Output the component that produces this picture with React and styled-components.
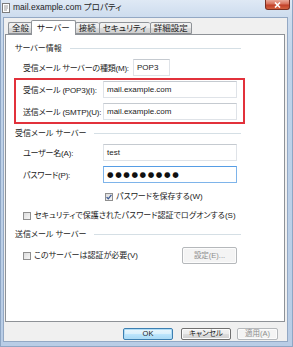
import React from "react";
import styled, { createGlobalStyle } from "styled-components";

const GlobalStyle = createGlobalStyle`
  html, body {
    margin: 0;
    padding: 0;
    background: #ffffff;
  }
  body {
    font-family: "Liberation Sans", "Noto Sans CJK JP", sans-serif;
    font-size: 8px;
    color: #1b1b1b;
    font-feature-settings: "palt";
  }
`;

const Window = styled.div`
  width: 293px;
  height: 347px;
  box-sizing: border-box;
  display: flex;
  flex-direction: column;
  background: linear-gradient(180deg, #dfe9f5 0px, #cddcee 17px, #bfd3ea 60px, #b9cde6 100%);
  border: 1px solid #8ea6c4;
  border-top: none;
`;

const TitleBar = styled.div`
  height: 17px;
  display: flex;
  align-items: flex-start;
  padding-left: 1px;
  flex-shrink: 0;
`;

const TitleIcon = styled.svg`
  width: 9px;
  height: 10px;
  margin-top: 3px;
  margin-right: 2px;
`;

const TitleText = styled.span`
  font-size: 8.5px;
  line-height: 14px;
  color: #1e1e1e;
`;

const CloseButton = styled.div`
  margin-left: auto;
  margin-right: 2px;
  width: 25px;
  height: 10px;
  box-sizing: border-box;
  border: 1px solid #7a2f22;
  border-top: none;
  border-radius: 0 0 3px 3px;
  background: linear-gradient(180deg, #e9a99a 0%, #d8705a 45%, #c0402a 55%, #d4613f 100%);
  display: flex;
  align-items: center;
  justify-content: center;
`;

const Client = styled.div`
  flex: 1;
  display: flex;
  flex-direction: column;
  margin: 0 4px 4px 2px;
  padding: 2px 0 1px 0;
  background: #f0f0f0;
  border: 1px solid #93a8c4;
`;

const TabStrip = styled.div`
  display: flex;
  align-items: flex-end;
  height: 14px;
  padding-left: 4px;
  position: relative;
  z-index: 1;
`;

const Tab = styled.div`
  box-sizing: border-box;
  height: ${(p) => (p.$active ? "15px" : "12px")};
  padding: 0 ${(p) => (p.$active ? "5px" : "3px")};
  margin: 0 ${(p) => (p.$active ? "-1px" : "0")};
  margin-bottom: ${(p) => (p.$active ? "-1px" : "0")};
  border: 1px solid #8e9297;
  border-bottom: ${(p) => (p.$active ? "none" : "1px solid #8e9297")};
  border-right: ${(p) => (p.$last || p.$active ? "1px solid #8e9297" : "none")};
  border-radius: 2px 2px 0 0;
  background: ${(p) =>
    p.$active ? "#ffffff" : "linear-gradient(180deg, #f2f2f2 0%, #ebebeb 50%, #dddddd 51%, #cfcfcf 100%)"};
  display: flex;
  align-items: center;
  font-size: 8.5px;
  line-height: 10px;
  position: relative;
  z-index: ${(p) => (p.$active ? 2 : 1)};
`;

const Panel = styled.div`
  flex: 1;
  margin: 0 2px 0 1px;
  background: #ffffff;
  border: 1px solid #8e9297;
  padding: 0 0 0 9px;
`;

const Content = styled.div`
  width: 230px;
  display: flex;
  flex-direction: column;
`;

const GroupHeading = styled.div`
  display: flex;
  align-items: center;
  height: 12px;
  margin-top: ${(p) => p.$top}px;
  gap: 8px;
  padding-right: 4px;
`;

const HeadingText = styled.span`
  white-space: nowrap;
  line-height: 12px;
`;

const HeadingLine = styled.div`
  flex: 1;
  height: 0;
  border-top: 1px solid #d5dfe5;
  border-bottom: 1px solid #ffffff;
`;

const Row = styled.div`
  display: flex;
  align-items: center;
  height: 17px;
  margin-top: ${(p) => p.$top || 0}px;
  padding: 0 ${(p) => (p.$inset ? 0 : 8)}px 0 ${(p) => (p.$inset ? 0 : 8)}px;
`;

const Label = styled.span`
  width: ${(p) => p.$width || 80}px;
  flex-shrink: 0;
  white-space: nowrap;
  letter-spacing: -0.2px;
`;

const TextBox = styled.div`
  box-sizing: border-box;
  width: ${(p) => (p.$width ? `${p.$width}px` : "auto")};
  flex: ${(p) => (p.$width ? "none" : 1)};
  height: 17px;
  display: flex;
  align-items: center;
  padding-left: 3px;
  background: #ffffff;
  border: 1px solid ${(p) => (p.$focused ? "#7eb4ea" : "#dfe3e8")};
  border-top-color: ${(p) => (p.$focused ? "#569de5" : "#c5cad0")};
  white-space: nowrap;
`;

const Dots = styled.span`
  font-family: "DejaVu Sans", sans-serif;
  font-size: 7.5px;
  letter-spacing: 1.6px;
  color: #101010;
`;

const RedBox = styled.div`
  margin-top: 2px;
  margin-left: -1px;
  width: 231px;
  box-sizing: border-box;
  border: 2px solid #e2313b;
  padding: 1px 6px 2px 7px;
  display: flex;
  flex-direction: column;
  gap: 5px;
`;

const CheckRow = styled.label`
  display: flex;
  align-items: center;
  height: 12px;
  margin-top: ${(p) => p.$top}px;
  padding-left: ${(p) => p.$indent}px;
  white-space: nowrap;
  gap: 3px;
`;

const CheckBox = styled.span`
  width: 8px;
  height: 8px;
  box-sizing: border-box;
  border: 1px solid #8f8f8f;
  background: linear-gradient(135deg, #dcdcdc 0%, #f6f6f6 100%);
  display: flex;
  align-items: center;
  justify-content: center;
  flex-shrink: 0;
`;

const CheckText = styled.span`
  line-height: 12px;
`;

const Spacer = styled.div`
  flex: 1;
`;

const DialogButton = styled.div`
  box-sizing: border-box;
  width: ${(p) => p.$width}px;
  height: ${(p) => p.$height || 12}px;
  margin-left: ${(p) => p.$gap || 0}px;
  border: 1px solid ${(p) => (p.$disabled ? "#b5b8bb" : p.$default ? "#3c7fb1" : "#707070")};
  border-radius: 2px;
  background: ${(p) =>
    p.$disabled
      ? "#f4f4f4"
      : p.$default
      ? "linear-gradient(180deg, #eaf6fd 0%, #d9f0fc 50%, #bee6fd 51%, #a7d9f5 100%)"
      : "linear-gradient(180deg, #f2f2f2 0%, #ebebeb 50%, #dddddd 51%, #cfcfcf 100%)"};
  box-shadow: ${(p) => (p.$default ? "inset 0 0 0 1px #b0dcf5" : "inset 0 0 0 1px #fcfcfc")};
  color: ${(p) => (p.$disabled ? "#8d8d8d" : "#1b1b1b")};
  display: flex;
  align-items: center;
  justify-content: center;
  font-size: 7.5px;
  line-height: 10px;
`;

const ButtonRow = styled.div`
  display: flex;
  justify-content: flex-end;
  margin-top: 6px;
  padding-right: 9px;
`;

const tabs = ["全般", "サーバー", "接続", "セキュリティ", "詳細設定"];

const Check = ({ checked }) => (
  <CheckBox>
    {checked && (
      <svg width="6" height="6" viewBox="0 0 6 6">
        <path d="M0.6 3.1 L2.3 4.8 L5.4 0.9" fill="none" stroke="#3d5a93" strokeWidth="1.3" />
      </svg>
    )}
  </CheckBox>
);

export default function App() {
  return (
    <>
      <GlobalStyle />
      <Window>
        <TitleBar>
          <TitleIcon viewBox="0 0 9 10">
            <rect x="0.5" y="0.5" width="7" height="9" fill="#ffffff" stroke="#7d7d7d" />
            <line x1="2" y1="3" x2="6" y2="3" stroke="#9a9a9a" />
            <line x1="2" y1="5" x2="6" y2="5" stroke="#9a9a9a" />
            <line x1="2" y1="7" x2="5" y2="7" stroke="#9a9a9a" />
          </TitleIcon>
          <TitleText>mail.example.com プロパティ</TitleText>
          <CloseButton>
            <svg width="7" height="6" viewBox="0 0 7 6">
              <path d="M1 0.5 L6 5.5 M6 0.5 L1 5.5" stroke="#ffffff" strokeWidth="1.6" />
            </svg>
          </CloseButton>
        </TitleBar>
        <Client>
          <TabStrip>
            {tabs.map((t, i) => (
              <Tab key={t} $active={i === 1} $last={i === tabs.length - 1}>
                {t}
              </Tab>
            ))}
          </TabStrip>
          <Panel>
            <Content>
              <GroupHeading $top={8}>
                <HeadingText>サーバー情報</HeadingText>
                <HeadingLine />
              </GroupHeading>
              <Row $top={4}>
                <Label $width={110}>受信メール サーバーの種類(M):</Label>
                <TextBox $width={37}>POP3</TextBox>
              </Row>
              <RedBox>
                <Row $inset>
                  <Label>受信メール (POP3)(I):</Label>
                  <TextBox>mail.example.com</TextBox>
                </Row>
                <Row $inset>
                  <Label>送信メール (SMTP)(U):</Label>
                  <TextBox>mail.example.com</TextBox>
                </Row>
              </RedBox>
              <GroupHeading $top={4}>
                <HeadingText>受信メール サーバー</HeadingText>
                <HeadingLine />
              </GroupHeading>
              <Row $top={4}>
                <Label>ユーザー名(A):</Label>
                <TextBox>test</TextBox>
              </Row>
              <Row $top={5}>
                <Label>パスワード(P):</Label>
                <TextBox $focused>
                  <Dots>●●●●●●●●●</Dots>
                </TextBox>
              </Row>
              <CheckRow $top={8} $indent={90}>
                <Check checked />
                <CheckText>パスワードを保存する(W)</CheckText>
              </CheckRow>
              <CheckRow $top={7} $indent={8}>
                <Check />
                <CheckText>セキュリティで保護されたパスワード認証でログオンする(S)</CheckText>
              </CheckRow>
              <GroupHeading $top={7}>
                <HeadingText>送信メール サーバー</HeadingText>
                <HeadingLine />
              </GroupHeading>
              <Row $top={6}>
                <CheckRow $top={0} $indent={0}>
                  <Check />
                  <CheckText>このサーバーは認証が必要(V)</CheckText>
                </CheckRow>
                <Spacer />
                <DialogButton $width={55} $height={17} $disabled>
                  設定(E)...
                </DialogButton>
              </Row>
            </Content>
          </Panel>
          <ButtonRow>
            <DialogButton $width={50} $default>
              OK
            </DialogButton>
            <DialogButton $width={50} $gap={8}>
              キャンセル
            </DialogButton>
            <DialogButton $width={41} $gap={6} $disabled>
              適用(A)
            </DialogButton>
          </ButtonRow>
        </Client>
      </Window>
    </>
  );
}
